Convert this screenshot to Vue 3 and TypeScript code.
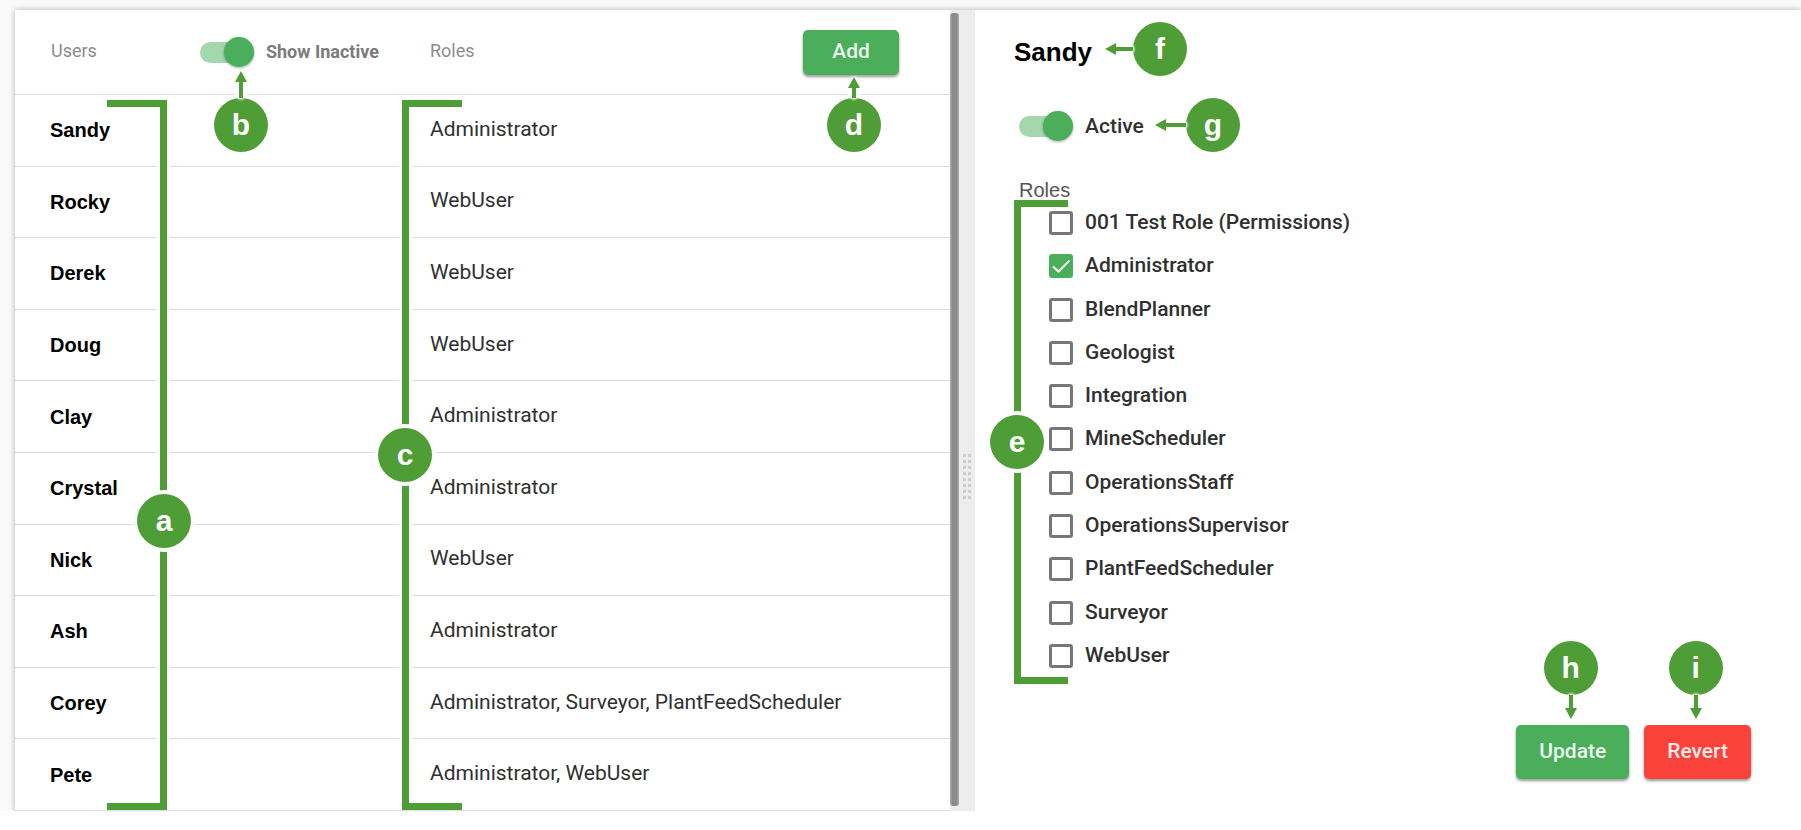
<script setup lang="ts">
import { ref } from 'vue'

interface User {
  name: string
  roles: string[]
}

interface Role {
  name: string
  granted: boolean
}

const users: User[] = [
  { name: 'Sandy', roles: ['Administrator'] },
  { name: 'Rocky', roles: ['WebUser'] },
  { name: 'Derek', roles: ['WebUser'] },
  { name: 'Doug', roles: ['WebUser'] },
  { name: 'Clay', roles: ['Administrator'] },
  { name: 'Crystal', roles: ['Administrator'] },
  { name: 'Nick', roles: ['WebUser'] },
  { name: 'Ash', roles: ['Administrator'] },
  { name: 'Corey', roles: ['Administrator', 'Surveyor', 'PlantFeedScheduler'] },
  { name: 'Pete', roles: ['Administrator', 'WebUser'] },
]

const roles = ref<Role[]>([
  { name: '001 Test Role (Permissions)', granted: false },
  { name: 'Administrator', granted: true },
  { name: 'BlendPlanner', granted: false },
  { name: 'Geologist', granted: false },
  { name: 'Integration', granted: false },
  { name: 'MineScheduler', granted: false },
  { name: 'OperationsStaff', granted: false },
  { name: 'OperationsSupervisor', granted: false },
  { name: 'PlantFeedScheduler', granted: false },
  { name: 'Surveyor', granted: false },
  { name: 'WebUser', granted: false },
])

const showInactive = ref(true)
const active = ref(true)
</script>

<template>
  <div class="page">
    <main class="split">
      <section class="users-pane">
        <table class="users">
          <thead>
            <tr>
              <th class="col-name" scope="col">
                <div class="name-head">
                  <span class="head-label">Users</span>
                  <label class="switch">
                    <input v-model="showInactive" type="checkbox" />
                    <span>Show Inactive</span>
                    <span class="callout up to-switch"><i class="arrow" /><b class="badge">b</b></span>
                  </label>
                </div>
              </th>
              <th class="col-roles" scope="col">
                <div class="roles-head">
                  <span class="head-label">Roles</span>
                  <div class="anchor">
                    <button class="btn add" type="button">Add</button>
                    <span class="callout up to-add"><i class="arrow" /><b class="badge">d</b></span>
                  </div>
                </div>
              </th>
            </tr>
          </thead>
          <tbody>
            <tr v-for="user in users" :key="user.name">
              <td class="user-name">{{ user.name }}</td>
              <td class="user-roles">{{ user.roles.join(', ') }}</td>
            </tr>
          </tbody>
        </table>
        <div class="bracket names"><b class="badge">a</b></div>
        <div class="bracket granted"><b class="badge">c</b></div>
      </section>

      <div class="scrollbar"><div class="thumb" /></div>
      <div class="gutter"><div class="grip"><i v-for="n in 16" :key="n" /></div></div>

      <section class="detail">
        <h1>
          Sandy
          <span class="callout left to-title"><b class="badge">f</b><i class="arrow" /></span>
        </h1>
        <label class="switch active">
          <input v-model="active" type="checkbox" />
          <span>Active</span>
          <span class="callout left to-active"><b class="badge">g</b><i class="arrow" /></span>
        </label>
        <fieldset>
          <legend>Roles</legend>
          <div class="role-list">
            <label v-for="role in roles" :key="role.name" class="role">
              <span class="box">
                <input v-model="role.granted" type="checkbox" />
                <svg v-if="role.granted" viewBox="0 0 24 24" aria-hidden="true">
                  <path d="M4 12.5 9.5 17.5 20.5 6.5" />
                </svg>
              </span>
              <span>{{ role.name }}</span>
            </label>
            <div class="bracket available"><b class="badge">e</b></div>
          </div>
        </fieldset>
        <div class="actions">
          <div class="anchor">
            <button class="btn" type="button">Update</button>
            <span class="callout down"><b class="badge">h</b><i class="arrow" /></span>
          </div>
          <div class="anchor">
            <button class="btn danger" type="button">Revert</button>
            <span class="callout down"><b class="badge">i</b><i class="arrow" /></span>
          </div>
        </div>
      </section>
    </main>
  </div>
</template>

<style>
body {
  margin: 0;
  background: #fff;
}
</style>

<style scoped>
.page {
  --mark: #4e9d37;
  --green: #4aae5b;
  box-sizing: border-box;
  min-height: 100vh;
  padding: 10px 0 19px 15px;
  background: linear-gradient(#fafafa, #fafafa) no-repeat 0 0 / 100% calc(100% - 19px);
  font-family: Roboto, "Liberation Sans", sans-serif;
  font-size: 21px;
  line-height: 24px;
  color: #303030;
}

.split {
  display: grid;
  grid-template-columns: minmax(0, 935fr) 9px 16px minmax(0, 826fr);
  height: calc(100vh - 29px);
  min-height: 801px;
  background: #fff;
  box-shadow: 0 0 6px rgba(0, 0, 0, 0.3);
  clip-path: inset(-10px 0 0 -15px);
}

.users-pane {
  position: relative;
}

.users {
  width: 100%;
  height: 100%;
  table-layout: fixed;
  border-collapse: separate;
  border-spacing: 0;
}

.users th,
.users td {
  padding: 0;
  text-align: left;
  vertical-align: middle;
  border-bottom: 1px solid #dcdcdc;
}

.users th {
  height: 84px;
  font-size: 18px;
  font-weight: 400;
  color: #8c8c8c;
}

.users .col-name {
  width: 415px;
}

.name-head,
.roles-head {
  display: flex;
  align-items: center;
}

.name-head {
  gap: 103px;
  padding-left: 36px;
}

.roles-head {
  justify-content: space-between;
  padding-right: 51px;
}

.head-label {
  padding-bottom: 3px;
}

.users .user-name {
  padding: 0 0 0 35px;
  font-family: "Liberation Sans", Arial, sans-serif;
  font-size: 20px;
  font-weight: 700;
  color: #000;
}

.users .user-roles {
  padding-bottom: 3px;
}

.switch {
  position: relative;
  display: inline-flex;
  align-items: center;
  gap: 12px;
  font-weight: 500;
}

.name-head .switch {
  font-weight: 700;
  color: #7b7b7b;
}

.switch input {
  appearance: none;
  position: relative;
  width: 54px;
  height: 30px;
  margin: 0;
}

.switch input::before {
  content: "";
  position: absolute;
  inset: 5px 0 4px;
  border-radius: 11px;
  background: #a4d7ad;
}

.switch input::after {
  content: "";
  position: absolute;
  top: 0;
  left: 0;
  width: 30px;
  height: 30px;
  border-radius: 50%;
  background: #fafafa;
  box-shadow: 0 1px 3px rgba(0, 0, 0, 0.35);
}

.switch input:checked::after {
  left: auto;
  right: 0;
  background: var(--green);
}

.btn {
  display: block;
  min-width: 96px;
  height: 54px;
  padding: 0 23px 3px;
  border: 0;
  border-radius: 5px;
  background: var(--green);
  box-shadow: 0 2px 3px rgba(0, 0, 0, 0.4);
  font: 500 21px/24px Roboto, "Liberation Sans", sans-serif;
  color: #eef8ef;
}

.btn.add {
  height: 45px;
}

.btn.danger {
  background: #f9423a;
  color: #ffe9e8;
}

.scrollbar {
  box-sizing: border-box;
  padding: 3px 0 5px;
  background: #ededed;
}

.thumb {
  height: 100%;
  border-radius: 3px;
  background: linear-gradient(90deg, #b0b0b0, #8c8c8c 25%, #8c8c8c 75%, #b0b0b0);
}

.gutter {
  box-sizing: border-box;
  padding: 444px 4px 0;
  background: #ededed;
}

.grip {
  display: grid;
  grid-template-columns: 3px 3px;
  gap: 3px 2px;
}

.grip i {
  height: 3px;
  background: #cdcdcd;
}

.detail {
  display: flex;
  flex-direction: column;
  align-items: flex-start;
  padding: 26px 50px 32px 39px;
}

h1 {
  position: relative;
  margin: 0;
  font: 700 26px/32px "Liberation Sans", Arial, sans-serif;
  color: #000;
}

.active {
  margin: 43px 0 0 5px;
}

fieldset {
  margin: 37px 0 0 5px;
  padding: 0;
  border: 0;
}

legend {
  padding: 0;
  font-family: "Liberation Sans", Arial, sans-serif;
  font-size: 20px;
  color: #555;
}

.role-list {
  position: relative;
  display: flex;
  flex-direction: column;
  justify-content: space-between;
  min-height: 457px;
  margin-top: 9px;
  padding-left: 30px;
}

.role {
  display: flex;
  gap: 12px;
  height: 24px;
  font-weight: 500;
  line-height: 22px;
}

.box {
  position: relative;
  width: 24px;
  height: 24px;
}

.box input {
  appearance: none;
  display: block;
  box-sizing: border-box;
  width: 24px;
  height: 24px;
  margin: 0;
  border: 3px solid #777;
  border-radius: 3px;
}

.box input:checked {
  border-color: var(--green);
  background: var(--green);
}

.box svg {
  position: absolute;
  inset: 0;
  fill: none;
  stroke: #f2faf3;
  stroke-width: 2.2;
  pointer-events: none;
}

.actions {
  display: flex;
  gap: 15px;
  align-self: flex-end;
  margin-top: auto;
}

.anchor {
  position: relative;
}

/* Lettered markers that lie over the page */
.badge {
  display: block;
  flex: none;
  width: 54px;
  height: 54px;
  border-radius: 50%;
  background: var(--mark);
  font: 700 30px/54px "Liberation Sans", Arial, sans-serif;
  color: #fff;
  text-align: center;
}

.callout {
  position: absolute;
  display: flex;
  align-items: center;
}

.callout .badge {
  box-shadow: 0 0 0 4px #fff;
}

.arrow {
  position: relative;
  z-index: 1;
  flex: none;
  background: var(--mark);
  filter: drop-shadow(0 0 1px #fff) drop-shadow(0 0 1px #fff) drop-shadow(0 0 1px #fff);
}

.arrow::before {
  content: "";
  position: absolute;
  border: 6px solid transparent;
}

.up,
.down {
  flex-direction: column;
}

.up .arrow,
.down .arrow {
  width: 4px;
  height: 16px;
}

.up .arrow {
  margin-top: 11px;
}

.up .arrow::before {
  bottom: 100%;
  left: -4px;
  border-top: 0;
  border-bottom: 11px solid var(--mark);
}

.down .arrow {
  height: 13px;
  margin-bottom: 11px;
}

.down .arrow::before {
  top: 100%;
  left: -4px;
  border-bottom: 0;
  border-top: 11px solid var(--mark);
}

.left .arrow {
  order: -1;
  width: 20px;
  height: 4px;
  margin-left: 11px;
}

.left .arrow::before {
  right: 100%;
  top: -4px;
  border-left: 0;
  border-right: 11px solid var(--mark);
}

.to-switch {
  top: 34px;
  left: 14px;
}

.to-add {
  top: 47px;
  left: 24px;
}

.to-add .arrow {
  height: 10px;
}

.to-title {
  top: -14px;
  left: 91px;
}

.to-title .arrow {
  width: 17px;
}

.to-active {
  top: -13px;
  left: 136px;
}

.down {
  bottom: 60px;
  left: 50%;
  margin-left: -29px;
}

.bracket {
  position: absolute;
  box-sizing: border-box;
  width: 60px;
  border: 7px solid var(--mark);
  border-left: 0;
  pointer-events: none;
}

.bracket::before {
  content: "";
  position: absolute;
  top: 0;
  bottom: 0;
  left: 50px;
  width: 13px;
  border: solid #fff;
  border-width: 0 3px;
  box-sizing: border-box;
}

.bracket .badge {
  position: absolute;
  right: -31px;
  box-shadow: 0 0 0 4px #fff;
}

.names {
  top: 90px;
  bottom: 1px;
  left: 92px;
}

.names .badge {
  top: 387px;
}

.granted,
.available {
  border: 7px solid var(--mark);
  border-right: 0;
}

.granted {
  top: 90px;
  bottom: 1px;
  left: 387px;
}

.granted .badge,
.available .badge {
  right: auto;
  left: -31px;
}

.granted::before,
.available::before {
  left: -10px;
}

.granted .badge {
  top: 321px;
}

.available {
  top: -11px;
  bottom: -16px;
  left: -5px;
  width: 54px;
}

.available .badge {
  top: 208px;
}
</style>
